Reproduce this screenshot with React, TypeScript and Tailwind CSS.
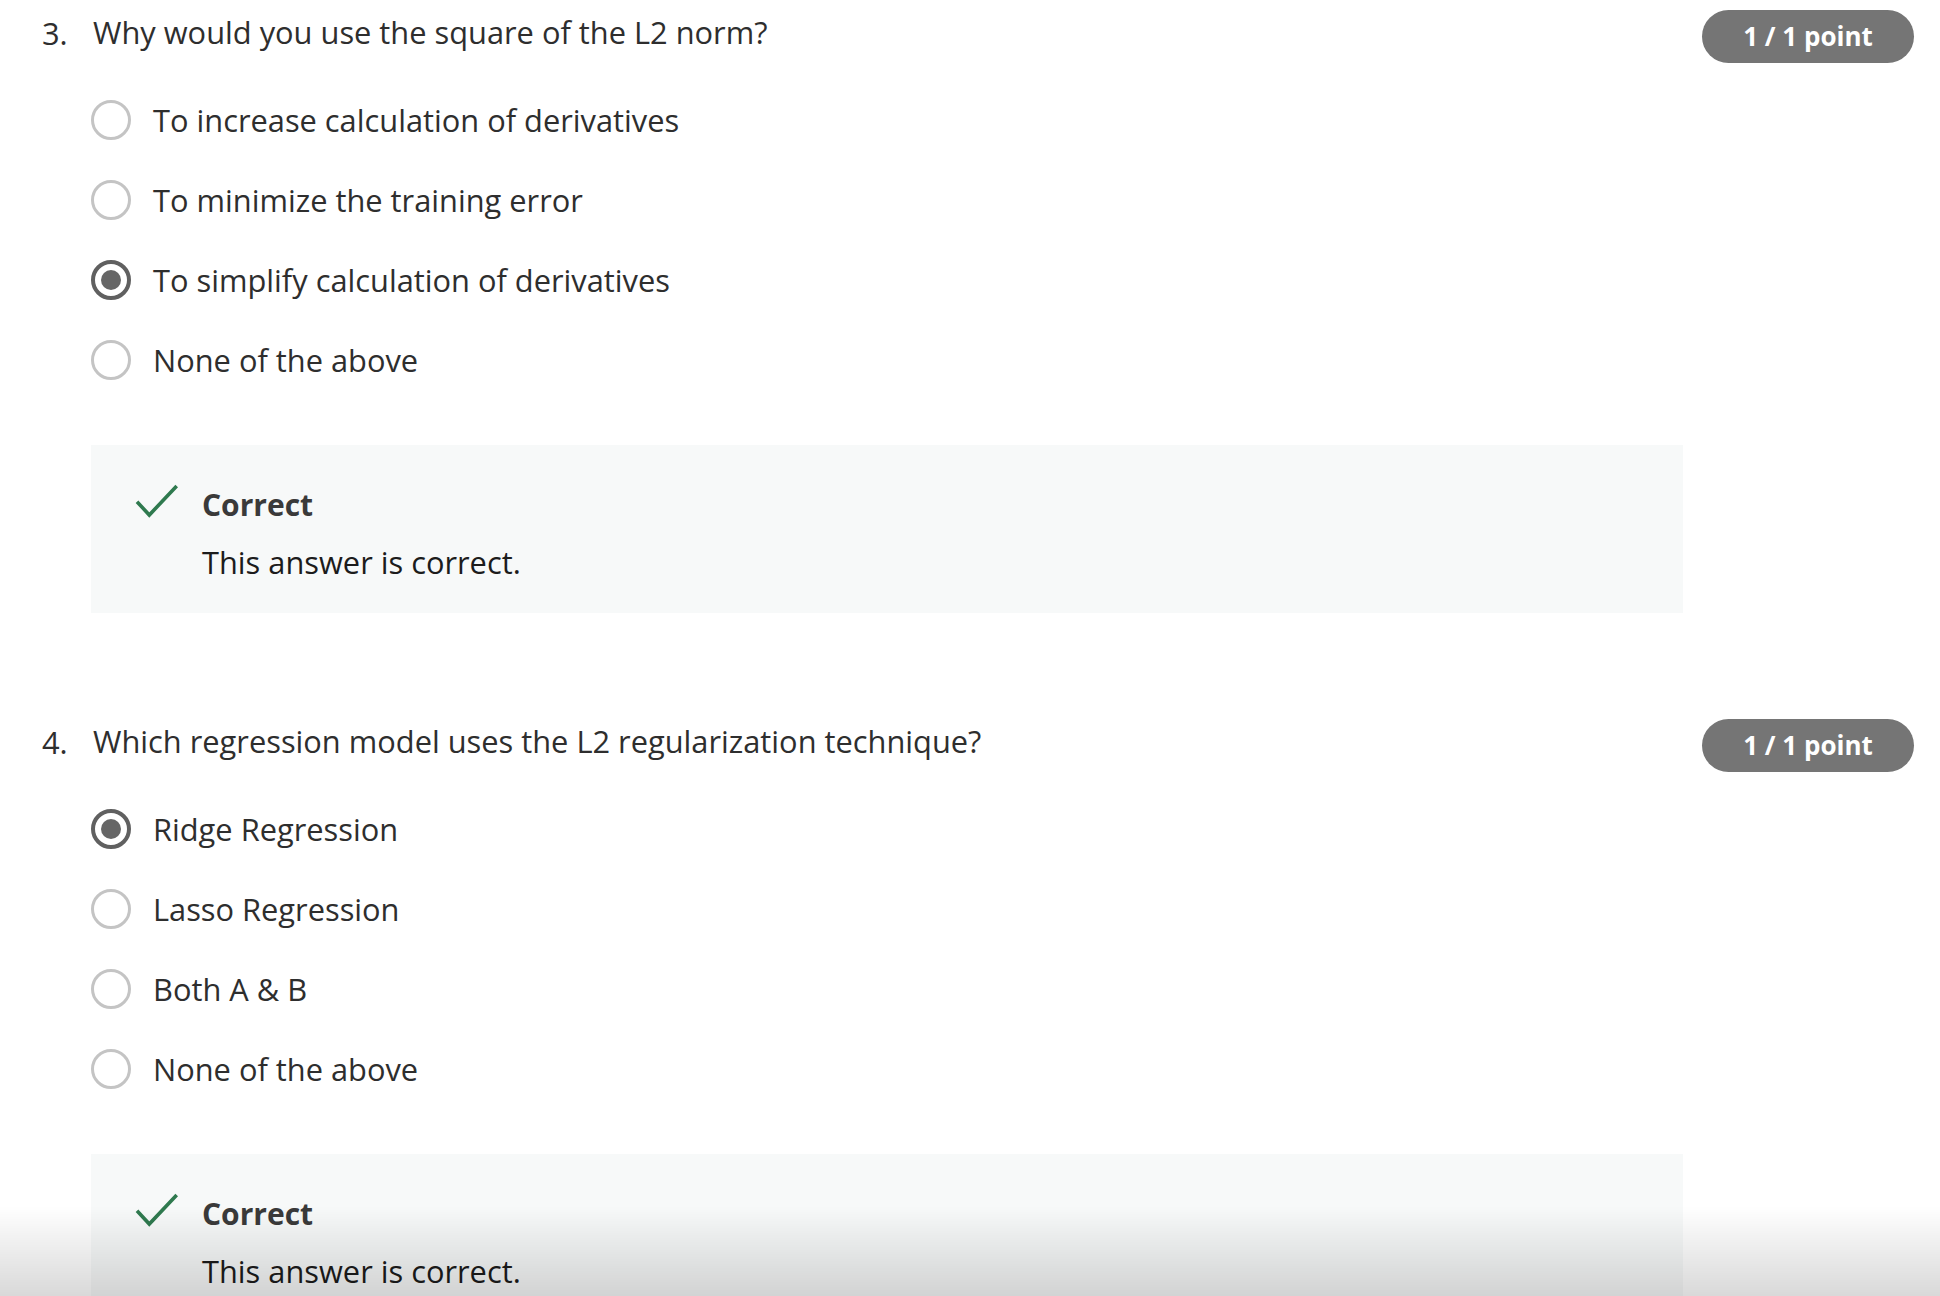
const questions = [
  {
    num: "3.",
    text: "Why would you use the square of the L2 norm?",
    options: [
      "To increase calculation of derivatives",
      "To minimize the training error",
      "To simplify calculation of derivatives",
      "None of the above",
    ],
    selected: 2,
  },
  {
    num: "4.",
    text: "Which regression model uses the L2 regularization technique?",
    options: ["Ridge Regression", "Lasso Regression", "Both A & B", "None of the above"],
    selected: 0,
  },
];

function Radio({checked}: {checked: boolean}) {
  if (checked) {
    return (
      <span className="flex h-[40px] w-[40px] shrink-0 items-center justify-center rounded-full border-[4px] border-[#606060]">
        <span className="h-[20px] w-[20px] rounded-full bg-[#666666]" />
      </span>
    );
  }
  return <span className="h-[40px] w-[40px] shrink-0 rounded-full border-[3.5px] border-[#c4c4c4]" />;
}

function Feedback() {
  return (
    <div className="mt-[45px] flex h-[168px] w-[1592px] items-start bg-[#f7f9f9] pl-[44px] pt-[40px]">
      {/* green tick */}
      <svg width="42" height="34" viewBox="0 0 42 34" className="shrink-0 overflow-visible">
        <polyline points="2,16.7 14.3,30 41.7,1" fill="none" stroke="#2f7a4f" strokeWidth="3.6" />
      </svg>
      <div className="ml-[25px]">
        <div className="text-[30px] font-bold leading-[40px] text-[#3a3a3a]">Correct</div>
        <div className="mt-[17px] text-[30.8px] leading-[40px] text-[#1c1c1c]">This answer is correct.</div>
      </div>
    </div>
  );
}

export default function App() {
  return (
    <div className="relative min-h-screen w-full bg-white font-['Open_Sans',sans-serif]">
      {questions.map((q, qi) => (
        <section key={q.num} className={qi === 0 ? "" : "mt-[96px]"}>
          <div className="flex h-[66px] items-center pl-[42px] pr-[26px] text-[30.8px] text-[#2e2e2e]">
            <span className="w-[51px] shrink-0">{q.num}</span>
            <span className="flex-1 -translate-y-px">{q.text}</span>
            <span className="mt-[6px] flex h-[53px] w-[212px] items-center justify-center rounded-full bg-[#757575] text-[26px] font-bold text-white">
              1 / 1 point
            </span>
          </div>

          <div className="ml-[91px]">
            <ul className="mt-[14px]">
              {q.options.map((opt, i) => (
                <li key={opt} className="flex h-[80px] items-center gap-[22px]">
                  <Radio checked={i === q.selected} />
                  <span className="text-[30.8px] text-[#2e2e2e]">{opt}</span>
                </li>
              ))}
            </ul>
            <Feedback />
          </div>
        </section>
      ))}

      {/* fade at the bottom of the viewport */}
      <div className="pointer-events-none fixed inset-x-0 bottom-0 h-[90px] bg-linear-to-b from-transparent to-black/15" />
    </div>
  );
}
